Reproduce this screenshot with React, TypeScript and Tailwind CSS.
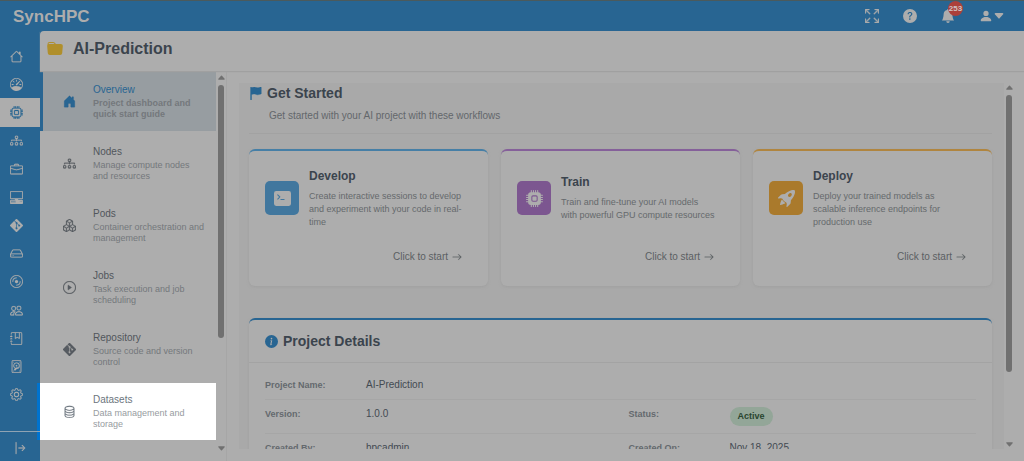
import type { ReactNode } from 'react';
import type { IconType } from 'react-icons';
import {
    BsArrowBarRight,
    BsArrowRight,
    BsArrowsFullscreen,
    BsBellFill,
    BsBoxes,
    BsBriefcase,
    BsCaretDownFill,
    BsCpu,
    BsCpuFill,
    BsDatabase,
    BsDeviceHdd,
    BsDiagram3,
    BsDisc,
    BsFlagFill,
    BsFolderFill,
    BsGear,
    BsGit,
    BsHdd,
    BsHouse,
    BsHouseDoorFill,
    BsInfoCircleFill,
    BsJournalBookmark,
    BsPcDisplayHorizontal,
    BsPeople,
    BsPersonFill,
    BsPlayCircle,
    BsQuestionCircleFill,
    BsRocketTakeoffFill,
    BsSpeedometer,
    BsTerminalFill,
} from 'react-icons/bs';

const railItems: { label: string; icon: IconType; active?: boolean }[] = [
    { label: 'Home', icon: BsHouse },
    { label: 'Dashboard', icon: BsSpeedometer },
    { label: 'AI projects', icon: BsCpu, active: true },
    { label: 'Clusters', icon: BsDiagram3 },
    { label: 'Workspaces', icon: BsBriefcase },
    { label: 'Desktops', icon: BsPcDisplayHorizontal },
    { label: 'Git', icon: BsGit },
    { label: 'Storage', icon: BsHdd },
    { label: 'Images', icon: BsDisc },
    { label: 'Users', icon: BsPeople },
    { label: 'Journal', icon: BsJournalBookmark },
    { label: 'Disks', icon: BsDeviceHdd },
    { label: 'Settings', icon: BsGear },
];

const menuItems: { title: string; text: string; icon: IconType }[] = [
    { title: 'Overview', text: 'Project dashboard and\nquick start guide', icon: BsHouseDoorFill },
    { title: 'Nodes', text: 'Manage compute nodes\nand resources', icon: BsDiagram3 },
    { title: 'Pods', text: 'Container orchestration and\nmanagement', icon: BsBoxes },
    { title: 'Jobs', text: 'Task execution and job\nscheduling', icon: BsPlayCircle },
    { title: 'Repository', text: 'Source code and version\ncontrol', icon: BsGit },
];

const workflows = [
    {
        title: 'Develop',
        text: 'Create interactive sessions to develop\nand experiment with your code in real-\ntime',
        icon: BsTerminalFill,
        border: 'border-t-[#467fa6]',
        tile: 'bg-[#41779e]',
    },
    {
        title: 'Train',
        text: 'Train and fine-tune your AI models\nwith powerful GPU compute resources',
        icon: BsCpuFill,
        border: 'border-t-[#85609a]',
        tile: 'bg-[#7c5690]',
    },
    {
        title: 'Deploy',
        text: 'Deploy your trained models as\nscalable inference endpoints for\nproduction use',
        icon: BsRocketTakeoffFill,
        border: 'border-t-[#b0853f]',
        tile: 'bg-[#aa7a2c]',
    },
];

function ScrollBar({ thumb }: { thumb: string }) {
    return (
        <div className="flex w-[10px] shrink-0 flex-col items-center gap-[3px] text-[#707070]" aria-hidden="true">
            <BsCaretDownFill className="size-[9px] shrink-0 rotate-180" />
            <div className="min-h-0 w-1.5 flex-1">
                <div className={`w-full rounded-full bg-[#707070] ${thumb}`} />
            </div>
            <BsCaretDownFill className="size-[9px] shrink-0" />
        </div>
    );
}

function DetailItem({ label, children }: { label: string; children: ReactNode }) {
    return (
        <div className="flex flex-1">
            <dt className="w-[101px] shrink-0 text-[9px] leading-4 font-bold text-[#64696e]">{label}</dt>
            <dd className="text-[10px] leading-4 text-[#434a52]">{children}</dd>
        </div>
    );
}

export default function App() {
    return (
        <div className="flex h-screen flex-col overflow-hidden bg-[#286592] font-['Liberation_Sans',Arial,sans-serif]">
            {/* Top bar */}
            <header className="flex h-[31px] shrink-0 items-center border-t border-[#4b5a5c] pr-[19px] pl-[13px] text-[#adadad]">
                <div className="flex-1 pt-0.5 text-[17px] leading-5 font-bold">SyncHPC</div>
                <div className="flex items-center gap-6">
                    <button type="button" aria-label="Full screen">
                        <BsArrowsFullscreen className="size-[14px]" strokeWidth={0.6} />
                    </button>
                    <button type="button" aria-label="Help">
                        <BsQuestionCircleFill className="size-[14px]" />
                    </button>
                    <button type="button" aria-label="Notifications" className="relative">
                        <BsBellFill className="size-[14px]" />
                        <span className="absolute -top-2 left-[7px] flex size-[15px] items-center justify-center rounded-full bg-[#ac403a] text-[8px] font-bold text-[#cfc4c4]">
                            253
                        </span>
                    </button>
                    <button type="button" aria-label="Account" className="flex items-center">
                        <BsPersonFill className="size-[14px]" />
                        <BsCaretDownFill className="size-3" />
                    </button>
                </div>
            </header>

            <div className="flex min-h-0 flex-1">
                {/* Icon rail */}
                <nav className="flex w-10 shrink-0 flex-col text-[#adadad]">
                    <div className="flex min-h-0 flex-1 flex-col pt-[11px] pb-[22px]">
                        {railItems.map(({ label, icon: Icon, active }) => (
                            <a
                                key={label}
                                href="#"
                                aria-label={label}
                                className={`flex min-h-0 flex-1 items-center pl-[10px] ${active ? 'bg-[#adadad] text-[#286592]' : ''}`}
                            >
                                <Icon className="size-[13px]" strokeWidth={0.2} />
                            </a>
                        ))}
                    </div>
                    <button
                        type="button"
                        aria-label="Expand menu"
                        className="relative z-10 flex h-[30px] shrink-0 items-center border-t border-[#8fa3b3] pt-0.5 pl-[13px]"
                    >
                        <BsArrowBarRight className="size-[14px]" strokeWidth={0.2} />
                    </button>
                </nav>

                <main className="flex min-w-0 flex-1 flex-col rounded-tl-sm bg-[#adadad]">
                    <div className="z-10 flex h-10 shrink-0 items-center gap-[10px] pb-1 pl-[7px] shadow-[0_1px_1px_#a0a0a0]">
                        <BsFolderFill className="size-4 text-[#b08f2b]" />
                        <h1 className="text-[16px] leading-5 font-bold text-[#3b444d]">AI-Prediction</h1>
                    </div>

                    <div className="flex min-h-0 flex-1">
                        {/* Project menu */}
                        <nav className="w-44 shrink-0">
                            {menuItems.map(({ title, text, icon: Icon }, i) => (
                                <a
                                    key={title}
                                    href="#"
                                    className={`mb-0.5 flex h-[60px] items-start border-l-[3px] pt-3 ${
                                        i === 0 ? 'border-[#286592] bg-[#979da1]' : 'border-transparent'
                                    }`}
                                >
                                    <span className="flex h-9 w-[50px] shrink-0 items-center pl-5">
                                        <Icon className={`size-[13px] ${i === 0 ? 'text-[#286592]' : 'text-[#565b61]'}`} strokeWidth={0.3} />
                                    </span>
                                    <span className="min-w-0 flex-1">
                                        <span className={`block text-[10px] leading-[14px] ${i === 0 ? 'text-[#286592]' : 'text-[#51565c]'}`}>
                                            {title}
                                        </span>
                                        <span
                                            className={`mt-px block text-[9px] leading-[11px] whitespace-pre-line text-[#74787c] ${i === 0 ? 'font-bold' : ''}`}
                                        >
                                            {text}
                                        </span>
                                    </span>
                                </a>
                            ))}
                            {/* Spotlighted tour step */}
                            <a
                                href="#"
                                className="relative mt-1 flex h-[57px] items-start bg-white pt-[10px] pl-[3px] before:absolute before:inset-y-0 before:-left-[3px] before:w-[3px] before:bg-[#0073cf]"
                            >
                                <span className="flex h-9 w-[50px] shrink-0 items-center pl-5">
                                    <BsDatabase className="size-[13px] text-[#6c757d]" strokeWidth={0.2} />
                                </span>
                                <span className="min-w-0 flex-1">
                                    <span className="block text-[10px] leading-[14px] text-[#6c757d]">Datasets</span>
                                    <span className="mt-px block text-[9px] leading-[11px] whitespace-pre-line text-[#979ca1]">
                                        {'Data management and\nstorage'}
                                    </span>
                                </span>
                            </a>
                        </nav>
                        <div className="flex border-r border-[#a6a6a6] pt-0.5 pb-2">
                            <ScrollBar thumb="h-[71%]" />
                        </div>

                        <div className="flex min-w-0 flex-1 pt-3 pr-[10px] pb-3 pl-3">
                            <div className="flex min-w-0 flex-1 flex-col overflow-hidden bg-[#a9a9a9] pr-3 pl-[10px]">
                                <section className="shrink-0">
                                    <div className="h-[51px] border-b border-[#a2a2a2]">
                                        <h2 className="flex items-center gap-[5px] text-[14px] leading-5 font-bold text-[#3b444d]">
                                            <BsFlagFill className="size-[13px] text-[#286592]" strokeWidth={0.6} />
                                            Get Started
                                        </h2>
                                        <p className="mt-1.5 pl-5 text-[10px] leading-[14px] text-[#63676b]">
                                            Get started with your AI project with these workflows
                                        </p>
                                    </div>
                                    <div className="mt-[15px] grid grid-cols-3 gap-[13px]">
                                        {workflows.map(({ title, text, icon: Icon, border, tile }) => (
                                            <article
                                                key={title}
                                                className={`flex h-[137px] flex-col justify-between rounded-md border-t-2 bg-[#adadad] px-4 pb-[22px] shadow-[0_1px_3px_#9f9f9f] ${border}`}
                                            >
                                                <div className="flex h-[94px] items-center gap-[10px]">
                                                    <span className={`flex size-[34px] shrink-0 items-center justify-center rounded-[5px] text-[#adadad] ${tile}`}>
                                                        <Icon className="size-[17px]" />
                                                    </span>
                                                    <div className="min-w-0 flex-1">
                                                        <h3 className="text-[12px] leading-4 font-bold text-[#3b444d]">{title}</h3>
                                                        <p className="mt-1.5 text-[9px] leading-[13px] whitespace-pre-line text-[#65696c]">{text}</p>
                                                    </div>
                                                </div>
                                                <a href="#" className="flex items-center justify-end gap-1 pr-[10px] text-[10px] leading-[14px] text-[#5b5f63]">
                                                    Click to start
                                                    <BsArrowRight className="size-[10px]" strokeWidth={0.3} />
                                                </a>
                                            </article>
                                        ))}
                                    </div>
                                </section>

                                <section className="mt-8 shrink-0 rounded-t-md border-t-2 border-t-[#286592] bg-[#adadad] shadow-[0_1px_3px_#9f9f9f]">
                                    <h2 className="flex h-[43px] items-center gap-[5px] border-b border-[#a3a3a3] pl-4 text-[14px] font-bold text-[#3b444d]">
                                        <BsInfoCircleFill className="size-[13px] text-[#286592]" />
                                        Project Details
                                    </h2>
                                    <dl className="px-4 pt-3">
                                        <div className="flex h-[25px] border-b border-[#a6a6a6] pt-0.5">
                                            <DetailItem label="Project Name:">AI-Prediction</DetailItem>
                                        </div>
                                        <div className="flex h-[34px] gap-4 border-b border-[#a6a6a6] pt-1.5">
                                            <DetailItem label="Version:">1.0.0</DetailItem>
                                            <DetailItem label="Status:">
                                                <span className="mt-px block rounded-full bg-[#93a698] px-2 text-[9px] leading-[19px] font-bold text-[#29452f]">
                                                    Active
                                                </span>
                                            </DetailItem>
                                        </div>
                                        <div className="flex h-[34px] gap-4 pt-1.5">
                                            <DetailItem label="Created By:">hpcadmin</DetailItem>
                                            <DetailItem label="Created On:">Nov 18, 2025</DetailItem>
                                        </div>
                                    </dl>
                                </section>
                            </div>
                            <ScrollBar thumb="h-[81%]" />
                        </div>
                    </div>
                </main>
            </div>
        </div>
    );
}
